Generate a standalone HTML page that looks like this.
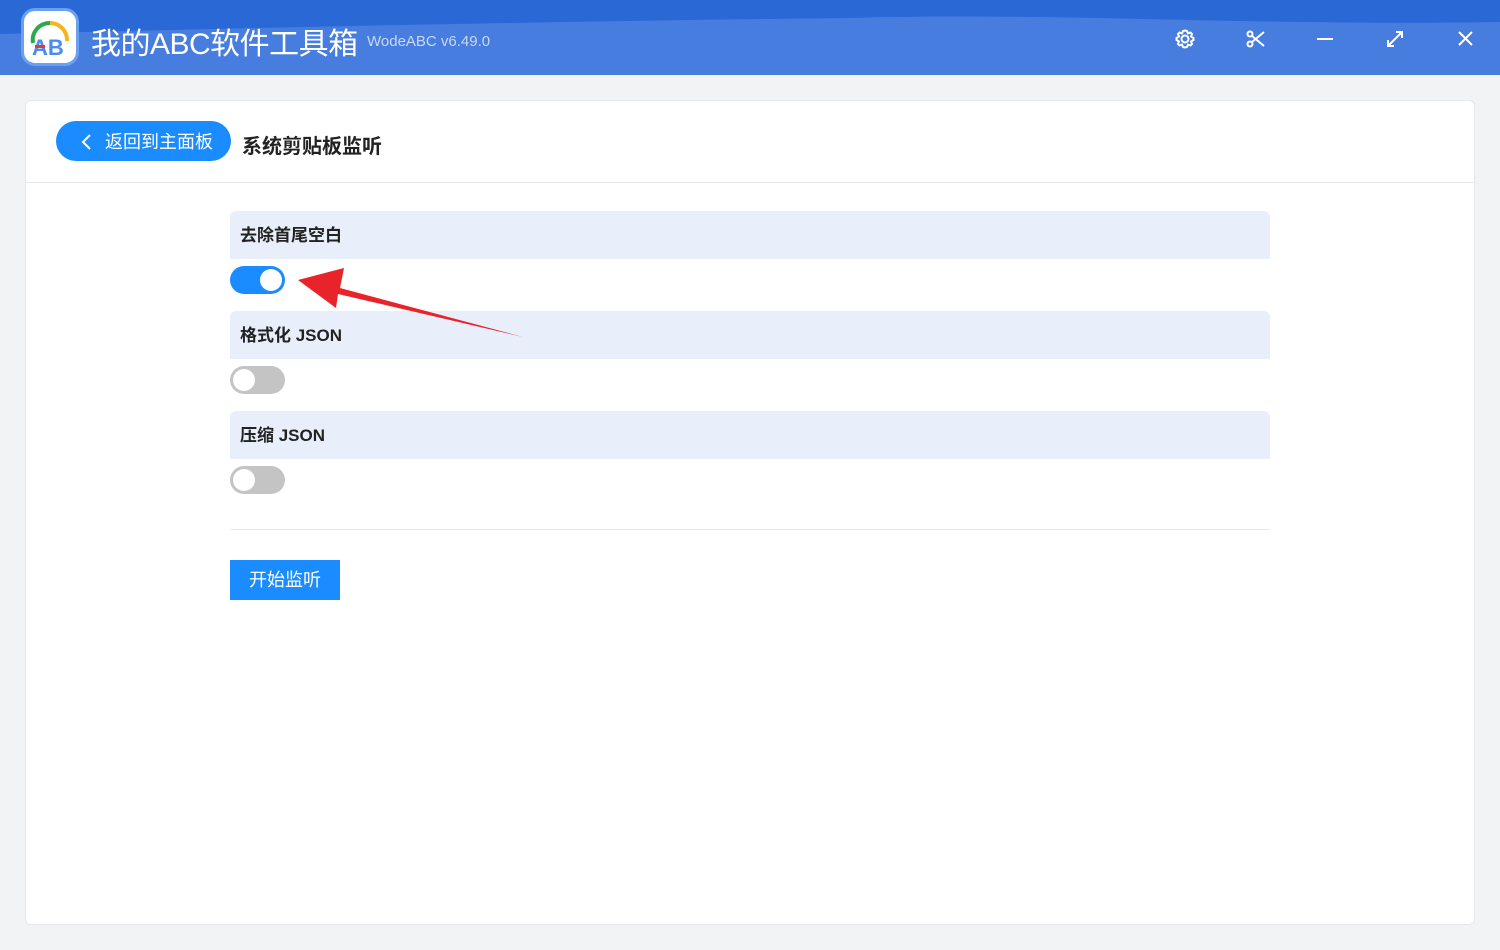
<!DOCTYPE html>
<html><head><meta charset="utf-8"><style>
*{margin:0;padding:0;box-sizing:border-box}
body{width:1500px;height:950px;background:#f2f3f5;font-family:"Liberation Sans","Noto Sans CJK SC",sans-serif;position:relative;overflow:hidden}
.top{position:absolute;left:0;top:0;width:1500px;height:75px;background:#477ddf;overflow:hidden}
.logo{position:absolute;left:21px;top:8px;width:58px;height:58px;border-radius:14px;background:#fff;border:3px solid #6aa0f0}
.title{position:absolute;left:91px;top:19px;color:#fff;font-size:30px;letter-spacing:-0.5px}
.ver{position:absolute;left:367px;top:33px;color:#c8d8f5;font-size:15px}
.card{position:absolute;left:25px;top:100px;width:1450px;height:825px;background:#fff;border:1px solid #e6e8eb;border-radius:6px}
.back{position:absolute;left:56px;top:121px;width:175px;height:40px;border-radius:20px;background:#1a8cff;color:#fff;font-size:18px;line-height:42px;padding-left:49px}
.h{position:absolute;left:242px;top:130px;font-size:20px;font-weight:bold;color:#222}
.line{position:absolute;left:26px;top:182px;width:1448px;height:1px;background:#e6e8eb}
.sec{position:absolute;left:230px;width:1040px;height:48px;background:#e8effb;border-radius:6px 6px 0 0;font-size:17px;font-weight:bold;color:#222;padding-left:10px;line-height:50px}
.tg{position:absolute;left:230px;width:55px;height:28px;border-radius:14px;background:#c4c4c4}
.tg::after{content:"";position:absolute;top:3px;left:3px;width:22px;height:22px;border-radius:50%;background:#fff}
.tg.on{background:#1a8cff}.tg.on::after{left:30px}
.btn{position:absolute;left:230px;top:560px;width:110px;height:40px;background:#1a8cff;color:#fff;font-size:18px;line-height:41px;text-align:center}
</style></head><body>
<div class="top">
<svg width="1500" height="75" style="position:absolute;left:0;top:0"><path d="M0 0H1500V22C1250 26 1050 12 850 18 500 22 250 28 0 34Z" fill="#2a68d6"/></svg>
<div class="logo"><svg width="52" height="52" viewBox="0 0 52 52"><path d="M9 32A17 17 0 0 1 26 12" stroke="#2aaa4a" stroke-width="4" fill="none"/><path d="M26 12A17 17 0 0 1 43 30" stroke="#f3b51b" stroke-width="4" fill="none"/><text x="8" y="44" font-size="22" font-weight="bold" fill="#4a8cf0" font-family="Liberation Sans">AB</text><rect x="11" y="34" width="10" height="3" fill="#e53935"/></svg></div>
<div class="title">我的ABC软件工具箱</div><div class="ver">WodeABC v6.49.0</div>
<svg width="340" height="40" style="position:absolute;left:1160px;top:20px" fill="none" stroke="#fff" stroke-width="2">
<circle cx="25" cy="19" r="3.5"/><path d="M25 10.5L27 11 28 13.5 30.5 12.5 32 14 31 16.5 33.5 18V20L31 21.5 32 24 30.5 25.5 28 24.5 27 27 25 27.5 23 27 22 24.5 19.5 25.5 18 24 19 21.5 16.5 20V18L19 16.5 18 14 19.5 12.5 22 13.5 23 11Z"/>
<circle cx="90" cy="14" r="2.5"/><circle cx="90" cy="24" r="2.5"/><path d="M92 22L104 12M92 16L104 26"/>
<path d="M157 19H173"/>
<path d="M228 26L242 12M236 12H242V18M228 20V26H234"/>
<path d="M299 12L312 25M312 12L299 25"/></svg>
</div>
<div class="card"></div>
<div class="back">返回到主面板</div>
<svg width="14" height="20" style="position:absolute;left:80px;top:132px"><path d="M10 3L3 10L10 17" stroke="#fff" stroke-width="2" fill="none"/></svg>
<div class="h">系统剪贴板监听</div>
<div class="line"></div>
<div class="sec" style="top:211px">去除首尾空白</div>
<div class="tg on" style="top:266px"></div>
<div class="sec" style="top:311px">格式化 JSON</div>
<div class="tg" style="top:366px"></div>
<div class="sec" style="top:411px">压缩 JSON</div>
<div class="tg" style="top:466px"></div>
<div style="position:absolute;left:230px;top:529px;width:1040px;height:1px;background:#e6e8eb"></div>
<div class="btn">开始监听</div>
<svg width="240" height="80" style="position:absolute;left:290px;top:262px"><path d="M233 75L50 26L54 6L8 18L46 46L48 32Z" fill="#e8232a"/></svg>
</body></html>
